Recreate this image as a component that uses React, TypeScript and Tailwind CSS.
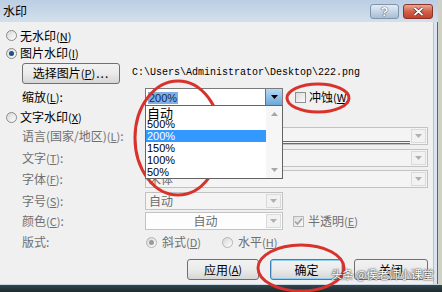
import React from "react";

const cjk = "font-['Noto_Sans_CJK_SC',sans-serif]";

function Radio({ checked, disabled }: { checked?: boolean; disabled?: boolean }) {
  return (
    <span
      className={`flex h-[11px] w-[11px] shrink-0 items-center justify-center rounded-full border ${
        disabled ? "border-[#b4b4b4]" : "border-[#8a8a8a]"
      } bg-gradient-to-br from-[#d6d6d6] to-[#ffffff]`}
    >
      {checked && (
        <span
          className={`h-[5px] w-[5px] rounded-full ${
            disabled ? "bg-[#9a9a9a]" : "bg-[#1b4f8f]"
          }`}
        />
      )}
    </span>
  );
}

function Check({ checked, disabled }: { checked?: boolean; disabled?: boolean }) {
  return (
    <span
      className={`flex h-[11px] w-[11px] shrink-0 items-center justify-center border ${
        disabled ? "border-[#b8b8b8]" : "border-[#8e8f8f]"
      } bg-gradient-to-br from-[#dcdcdc] to-[#fbfbfb]`}
    >
      {checked && (
        <svg width="9" height="9" viewBox="0 0 9 9">
          <path d="M1 4.5 L3.5 7 L8 1.5" stroke="#a0a0a0" strokeWidth="1.6" fill="none" />
        </svg>
      )}
    </span>
  );
}

function Arrow({ color = "#b0b0b0" }: { color?: string }) {
  return (
    <svg width="7" height="4" viewBox="0 0 7 4">
      <path d="M0 0 H7 L3.5 4 Z" fill={color} />
    </svg>
  );
}

function Mn({ k }: { k: string }) {
  return (
    <span className="text-[11px]">
      (<span className="underline">{k}</span>)
    </span>
  );
}

function Combo({
  width,
  text,
  center,
  bg = "bg-[#f4f4f4]",
  children,
}: {
  width: string;
  text?: string;
  center?: boolean;
  bg?: string;
  children?: React.ReactNode;
}) {
  return (
    <div className={`relative flex h-[18px] ${width} items-center border border-[#c2c2c2] ${bg}`}>
      <div
        className={`flex-1 px-[3px] text-[12px] leading-none text-[#6d6d6d] ${cjk} ${
          center ? "text-center" : ""
        }`}
      >
        {text}
      </div>
      <div className="m-[1px] flex h-[14px] w-[15px] items-center justify-center border border-[#dadada] bg-[#f2f2f2]">
        <Arrow />
      </div>
      {children}
    </div>
  );
}

function Btn({
  label,
  k,
  tail,
  width,
  primary,
  className = "",
}: {
  label: string;
  k?: string;
  tail?: string;
  width: string;
  primary?: boolean;
  className?: string;
}) {
  return (
    <div
      className={`flex h-[21px] ${width} items-center justify-center rounded-[3px] border ${
        primary ? "border-[#3c7fb1] shadow-[inset_0_0_0_1px_#8fd0f5]" : "border-[#707070]"
      } bg-gradient-to-b from-[#f2f2f2] via-[#ebebeb] to-[#d6d6d6] text-[12px] text-black ${cjk} ${className}`}
    >
      {label}
      {k && <Mn k={k} />}
      {tail && <span className="ml-[1px] tracking-[1px]">{tail}</span>}
    </div>
  );
}

const listItems = ["自动", "500%", "200%", "150%", "100%", "50%"];

export default function App() {
  return (
    <div className="relative h-[292px] w-[442px] overflow-hidden bg-[#cfd0c8]">
      <div className="flex w-[438px] flex-col">
        {/* title bar */}
        <div className="flex h-[22px] items-center bg-gradient-to-b from-[#bccee3] to-[#d3dfec] pl-[3px]">
          <span className={`flex-1 text-[12px] text-black ${cjk}`}>水印</span>
          <div className="mr-[4px] flex h-[15px] w-[29px] items-center justify-center rounded-[3px] border border-[#7f93ab] bg-gradient-to-b from-[#e4ecf5] via-[#c6d5e6] to-[#a9bdd5]">
            <span className="font-['Liberation_Sans',sans-serif] text-[13px] font-bold leading-none text-white [text-shadow:0_0_1px_#2b3e55,0_0_1px_#2b3e55]">
              ?
            </span>
          </div>
          <div className="mr-[5px] flex h-[15px] w-[30px] items-center justify-center rounded-[3px] border border-[#8a3327] bg-gradient-to-b from-[#eaa795] via-[#d2604b] to-[#c2412b]">
            <svg width="11" height="9" viewBox="0 0 11 9">
              <path d="M1.5 1 L9.5 8 M9.5 1 L1.5 8" stroke="#4a1a12" strokeWidth="3" />
              <path d="M1.5 1 L9.5 8 M9.5 1 L1.5 8" stroke="#ffffff" strokeWidth="1.8" />
            </svg>
          </div>
        </div>

        {/* client */}
        <div className="flex">
          <div
            className={`flex h-[262px] w-[433px] flex-col bg-[#f0f0f0] text-[12px] leading-none text-black ${cjk}`}
          >
            <div className="mt-[5px] flex h-[17px] items-center gap-[3px] pl-[6px]">
              <Radio />
              <span>
                无水印
                <Mn k="N" />
              </span>
            </div>
            <div className="flex h-[18px] items-center gap-[3px] pl-[6px]">
              <Radio checked />
              <span>
                图片水印
                <Mn k="I" />
              </span>
            </div>
            <div className="mt-[1px] flex h-[20px] items-center pl-[22px]">
              <Btn label="选择图片" k="P" tail="..." width="w-[98px]" className="h-[20px]" />
              <span className="ml-[12px] font-['Liberation_Mono',monospace] text-[10px] text-black">
                C:\Users\Administrator\Desktop\222.png
              </span>
            </div>
            <div className="mt-[5px] flex h-[18px] items-center pl-[22px]">
              <span className="w-[123px]">
                缩放
                <Mn k="L" />:
              </span>
              <div className="relative flex h-[18px] w-[138px] items-center border border-[#7a7a7a] bg-white">
                <div className="flex-1 pl-[2px]">
                  <span className="bg-[#7fb0e4] px-[1px] font-['Liberation_Sans',sans-serif] text-[11px] text-[#13284a]">
                    200%
                  </span>
                </div>
                <div className="flex h-[16px] w-[17px] items-center justify-center border-l border-[#3c7fb1] bg-gradient-to-b from-[#b9daf5] to-[#6ba7d8]">
                  <Arrow color="#000000" />
                </div>
                {/* open list */}
                <div className="absolute left-[-1px] top-full z-10 flex h-[74px] w-[138px] border border-[#646464] bg-white">
                  <div className="flex flex-1 flex-col">
                    {listItems.map((it) => (
                      <div
                        key={it}
                        className={`flex h-[12px] items-center pl-[1px] ${
                          it === "200%" ? "bg-[#3399ff] text-white" : "text-black"
                        } ${it === "自动" ? `${cjk} text-[13px]` : "font-['Liberation_Sans',sans-serif] text-[11px]"}`}
                      >
                        {it}
                      </div>
                    ))}
                  </div>
                  <div className="flex w-[16px] flex-col items-center justify-between bg-[#f6f6f6] py-[6px]">
                    <svg width="7" height="4" viewBox="0 0 7 4">
                      <path d="M0 4 H7 L3.5 0 Z" fill="#a8a8a8" />
                    </svg>
                    <Arrow color="#a8a8a8" />
                  </div>
                </div>
              </div>
              <div className="ml-[12px] flex items-center gap-[3px]">
                <Check />
                <span>
                  冲蚀
                  <Mn k="W" />
                </span>
              </div>
            </div>
            <div className="mt-[2px] flex h-[18px] items-center gap-[3px] pl-[6px]">
              <Radio />
              <span>
                文字水印
                <Mn k="X" />
              </span>
            </div>
            <div className="mt-[1px] flex h-[18px] items-center pl-[22px] text-[#6f6f6f]">
              <span className="w-[123px]">
                语言(国家/地区)
                <Mn k="L" />:
              </span>
              <Combo width="w-[283px]">
                <div className="absolute left-[137px] right-[17px] top-[13px] h-[3px] border-y border-[#6a6a6a]" />
              </Combo>
            </div>
            <div className="mt-[4px] flex h-[18px] items-center pl-[22px] text-[#6f6f6f]">
              <span className="w-[123px]">
                文字
                <Mn k="T" />:
              </span>
              <Combo width="w-[283px]" />
            </div>
            <div className="mt-[3px] flex h-[18px] items-center pl-[22px] text-[#6f6f6f]">
              <span className="w-[123px]">
                字体
                <Mn k="F" />:
              </span>
              <Combo width="w-[283px]" text="宋体" />
            </div>
            <div className="mt-[4px] flex h-[18px] items-center pl-[22px] text-[#6f6f6f]">
              <span className="w-[123px]">
                字号
                <Mn k="S" />:
              </span>
              <Combo width="w-[138px]" text="自动" />
            </div>
            <div className="mt-[2px] flex h-[18px] items-center pl-[22px] text-[#6f6f6f]">
              <span className="w-[123px]">
                颜色
                <Mn k="C" />:
              </span>
              <Combo width="w-[138px]" text="自动" center bg="bg-[#fdfdfd]" />
              <div className="ml-[10px] flex items-center gap-[4px]">
                <Check checked disabled />
                <span>
                  半透明
                  <Mn k="E" />
                </span>
              </div>
            </div>
            <div className="mt-[3px] flex h-[18px] items-center pl-[22px] text-[#6f6f6f]">
              <span className="w-[124px]">版式:</span>
              <Radio checked disabled />
              <span className="ml-[5px]">
                斜式
                <Mn k="D" />
              </span>
              <span className="ml-[21px]">
                <Radio disabled />
              </span>
              <span className="ml-[5px]">
                水平
                <Mn k="H" />
              </span>
            </div>
            <div className="mt-[8px] flex h-[21px] items-center pl-[187px]">
              <Btn label="应用" k="A" width="w-[72px]" />
              <Btn label="确定" width="w-[73px]" primary className="ml-[11px]" />
              <Btn label="关闭" width="w-[74px]" className="ml-[11px]" />
            </div>
          </div>
          {/* right frame */}
          <div className="w-[1px] bg-[#b9c3ce]" />
          <div className="w-[3px] bg-[#dbe4ee]" />
          <div className="w-[1px] bg-[#5d6670]" />
        </div>
        <div className="h-[1px] w-[438px] bg-[#c9d5e2]" />
      </div>
      <div className="h-[7px] w-[442px] bg-gradient-to-b from-[#33474e] to-[#1b2a2f]" />

      {/* red annotation ellipses */}
      <svg className="pointer-events-none absolute left-0 top-0" width="442" height="292">
        <ellipse cx="178" cy="138" rx="43" ry="57" fill="none" stroke="#d8322c" strokeWidth="3" />
        <ellipse cx="318" cy="98" rx="31" ry="14" fill="none" stroke="#d8322c" strokeWidth="3" />
        <ellipse cx="301" cy="268" rx="43" ry="23" fill="none" stroke="#d8322c" strokeWidth="3" />
      </svg>

      {/* watermark */}
      <div
        className={`absolute left-[331px] top-[269px] whitespace-nowrap text-[11.5px] leading-none tracking-[-0.3px] text-white [text-shadow:0_0_2px_#333,0_0_1px_#333] ${cjk}`}
      >
        头条 @侯老师小课堂
      </div>
    </div>
  );
}
